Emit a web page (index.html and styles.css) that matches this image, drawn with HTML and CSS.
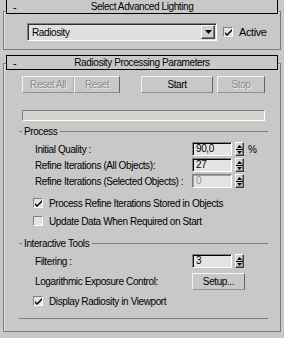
FILE: index.html
```html
<!DOCTYPE html>
<html lang="en">
  <head>
    <meta charset="UTF-8" />
    <title>Advanced Lighting</title>
    <link rel="stylesheet" href="styles.css">
  </head>
  <body>
    <div class="rollout first">
      <div class="rollout-head">
        <span class="toggle">-</span>
        <span class="title">Select Advanced Lighting</span>
      </div>
      <div class="rollout-body engine">
        <div class="dropdown">
          <span class="dropdown-text">Radiosity</span>
          <span class="drop-btn">
            <svg viewBox="0 0 7 4" width="7" height="4"><path d="M0 0h7L3.5 4z" /></svg>
          </span>
        </div>
        <div class="check">
          <span class="box checked">
            <svg viewBox="0 0 7 7" width="7" height="7"><path d="M0 3l2 2 5-5v2L2 7 0 5z" /></svg>
          </span>
          <span>Active</span>
        </div>
      </div>
    </div>

    <div class="rollout">
      <div class="rollout-head">
        <span class="toggle">-</span>
        <span class="title">Radiosity Processing Parameters</span>
      </div>
      <div class="rollout-body">
        <div class="buttons">
          <div class="button disabled reset-all">Reset All</div>
          <div class="button disabled reset">Reset</div>
          <div class="button start">Start</div>
          <div class="button disabled stop">Stop</div>
        </div>
        <div class="progress"></div>

        <div class="group">
          <div class="group-head"><span class="group-title">Process</span></div>
          <div class="row">
            <span class="label">Initial Quality :</span>
            <span class="field">90,0</span>
            <span class="spinner"><svg viewBox="0 0 7 11" width="7" height="11"><path d="M3.5 1L6 4H1z M0 5h7v1H0z M1 7h5L3.5 10z" /></svg></span>
            <span class="unit">%</span>
          </div>
          <div class="row">
            <span class="label">Refine Iterations (All Objects):</span>
            <span class="field">27</span>
            <span class="spinner"><svg viewBox="0 0 7 11" width="7" height="11"><path d="M3.5 1L6 4H1z M0 5h7v1H0z M1 7h5L3.5 10z" /></svg></span>
          </div>
          <div class="row">
            <span class="label">Refine Iterations (Selected Objects) :</span>
            <span class="field disabled">0</span>
            <span class="spinner"><svg viewBox="0 0 7 11" width="7" height="11"><path d="M3.5 1L6 4H1z M0 5h7v1H0z M1 7h5L3.5 10z" /></svg></span>
          </div>
          <div class="check-list">
            <div class="check">
              <span class="box checked">
                <svg viewBox="0 0 7 7" width="7" height="7"><path d="M0 3l2 2 5-5v2L2 7 0 5z" /></svg>
              </span>
              <span>Process Refine Iterations Stored in Objects</span>
            </div>
            <div class="check">
              <span class="box"></span>
              <span>Update Data When Required on Start</span>
            </div>
          </div>
        </div>

        <div class="group tools">
          <div class="group-head"><span class="group-title">Interactive Tools</span></div>
          <div class="row">
            <span class="label">Filtering :</span>
            <span class="field">3</span>
            <span class="spinner"><svg viewBox="0 0 7 11" width="7" height="11"><path d="M3.5 1L6 4H1z M0 5h7v1H0z M1 7h5L3.5 10z" /></svg></span>
          </div>
          <div class="row setup-row">
            <span class="label">Logarithmic Exposure Control:</span>
            <div class="button setup">Setup...</div>
          </div>
          <div class="check-list">
            <div class="check">
              <span class="box checked">
                <svg viewBox="0 0 7 7" width="7" height="7"><path d="M0 3l2 2 5-5v2L2 7 0 5z" /></svg>
              </span>
              <span>Display Radiosity in Viewport</span>
            </div>
          </div>
          <div class="group-foot"></div>
        </div>
      </div>
    </div>
  </body>
</html>
```

FILE: styles.css
```css
body {
  margin: 0;
  background: #c8c8c8;
  font-family: "Liberation Sans", Arial, sans-serif;
  font-size: 10px;
  letter-spacing: -0.4px;
  color: #000;
  overflow: hidden;
  white-space: nowrap;
}

.rollout {
  margin: 13px 3px 0 3px;
  border: 1px solid #7c7c7c;
  box-shadow: inset 1px 1px 0 #e4e4e4;
}

.rollout.first {
  margin-top: 11px;
}

.rollout-head {
  display: flex;
  align-items: center;
  height: 13px;
  margin: -9px 2px 0 2px;
  border: 1px solid #000;
  background: #c8c8c8;
  position: relative;
}

.rollout.first .rollout-head {
  margin-top: -13px;
}

.toggle {
  width: 12px;
  padding-left: 6px;
  font-size: 11px;
}

.title {
  flex: 1;
  text-align: center;
  margin-right: 18px;
}

.rollout-body {
  padding: 0 15px 12px 18px;
}

.engine {
  display: flex;
  align-items: center;
  padding: 9px 0 8px 23px;
}

.dropdown {
  width: 186px;
  height: 14px;
  display: flex;
  align-items: center;
  background: #e0e0e0;
  border: 1px solid;
  border-color: #808080 #fff #fff #808080;
  box-shadow: inset 1px 1px 0 #303030;
  padding: 1px;
}

.dropdown-text {
  flex: 1;
  padding-left: 3px;
}

.drop-btn,
.spinner,
.button {
  background: #d4d0c8;
  border: 1px solid;
  border-color: #fff #404040 #404040 #fff;
  box-shadow: inset -1px -1px 0 #808080;
  box-sizing: border-box;
}

.drop-btn {
  width: 14px;
  height: 14px;
  display: flex;
  align-items: center;
  justify-content: center;
}

.check {
  display: flex;
  align-items: center;
  height: 18px;
}

.engine .check {
  margin-left: 6px;
  font-size: 11px;
}

.box {
  width: 10px;
  height: 10px;
  box-sizing: border-box;
  margin-right: 6px;
  background: #e4e4e4;
  border: 1px solid;
  border-color: #808080 #fff #fff #808080;
  display: flex;
  align-items: center;
  justify-content: center;
}

.buttons {
  display: flex;
  padding-top: 6px;
}

.button {
  height: 17px;
  display: flex;
  align-items: center;
  justify-content: center;
  background: #c8c8c8;
  box-shadow: none;
  border-color: #f4f4f4 #606060 #909090 #f4f4f4;
}

.button.disabled {
  color: #8c8c8c;
  text-shadow: 1px 1px 0 #ececec;
}

.reset-all {
  width: 52px;
  border-right-color: #b0b0b0;
}

.reset {
  width: 46px;
}

.start {
  width: 72px;
  margin-left: 21px;
}

.stop {
  width: 48px;
  margin-left: 4px;
}

.progress {
  height: 11px;
  margin-top: 17px;
  box-sizing: border-box;
  background: #d6d3ce;
  border: 1px solid;
  border-color: #808080 #fff #fff #808080;
}

.group {
  margin: 5px -3px 0 -3px;
}

.group-head {
  display: flex;
  align-items: center;
  height: 11px;
}

.group-head::before,
.group-head::after {
  content: "";
  height: 1px;
  background: #808080;
}

.group-head::before {
  width: 3px;
  margin-right: 2px;
}

.group-head::after {
  flex: 1;
  margin-left: 3px;
}

.row {
  display: flex;
  align-items: center;
  height: 16px;
  padding-left: 16px;
}

.group-head + .row {
  margin-top: 4px;
}

.label {
  width: 157px;
}

.field {
  width: 40px;
  height: 14px;
  box-sizing: border-box;
  background: #e4e4e4;
  border: 1px solid;
  border-color: #808080 #fff #fff #808080;
  box-shadow: inset 1px 1px 0 #000;
  padding-left: 3px;
  line-height: 12px;
}

.field.disabled {
  color: #909090;
  box-shadow: inset 1px 1px 0 #a0a0a0;
}

.spinner {
  width: 9px;
  height: 14px;
  margin-left: 3px;
  display: flex;
  align-items: center;
  justify-content: center;
}

.unit {
  margin-left: 4px;
}

.check-list {
  margin-top: 5px;
  padding-left: 14px;
}

.tools {
  margin-top: 8px;
}

.setup-row {
  height: 17px;
  margin-top: 4px;
}

.setup {
  width: 53px;
}

.tools .check-list {
  margin-top: 2px;
}

.group-foot {
  height: 1px;
  margin-top: 8px;
  background: #808080;
}
```
